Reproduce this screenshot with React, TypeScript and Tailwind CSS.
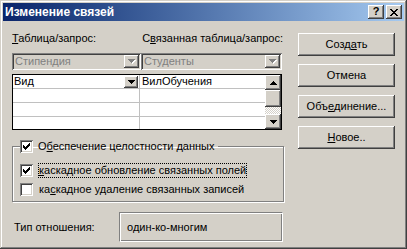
import React from "react";

const raised =
  "shadow-[inset_-1px_-1px_#404040,inset_1px_1px_#ffffff,inset_-2px_-2px_#808080,inset_2px_2px_#d4d0c8] bg-[#d4d0c8]";
const sunken =
  "shadow-[inset_1px_1px_#808080,inset_-1px_-1px_#ffffff,inset_2px_2px_#404040,inset_-2px_-2px_#d4d0c8]";

function Arrow({ up = false }: { up?: boolean }) {
  return (
    <svg width="7" height="4" viewBox="0 0 7 4" shapeRendering="crispEdges">
      {up ? (
        <path d="M3 0h1v1h1v1h1v1h1v1H0V3h1V2h1V1h1z" fill="#000" />
      ) : (
        <path d="M0 0h7v1H6v1H5v1H4v1H3V3H2V2H1V1H0z" fill="#000" />
      )}
    </svg>
  );
}

function DisabledArrow() {
  return (
    <svg width="8" height="5" viewBox="0 0 8 5" shapeRendering="crispEdges" className="block">
      <path d="M1 1h7v1H7v1H6v1H5v1H4V4H3V3H2V2H1z" fill="#ffffff" />
      <path d="M0 0h7v1H6v1H5v1H4v1H3V3H2V2H1V1H0z" fill="#808080" />
    </svg>
  );
}

function Check({ checked }: { checked: boolean }) {
  return (
    <div className={`w-[13px] h-[13px] bg-white shrink-0 ${sunken} flex items-center justify-center`}>
      {checked && (
        <svg width="7" height="7" viewBox="0 0 7 7" shapeRendering="crispEdges">
          <path d="M6 0h1v3H6v1H5v1H4v1H3v1H2V6H1V5H0V2h1v1h1v1h1V3h1V2h1V1h1z" fill="#000" />
        </svg>
      )}
    </div>
  );
}

function Button({ children }: { children: React.ReactNode }) {
  return (
    <div className={`h-[23px] w-[97px] ${raised} flex items-center justify-center whitespace-nowrap`}>
      {children}
    </div>
  );
}

export default function App() {
  return (
    <div className="w-[407px] h-[249px] bg-[#d4d0c8] p-[3px] flex flex-col font-['Liberation_Sans',sans-serif] text-[11px] leading-[13px] text-black whitespace-nowrap shadow-[inset_-1px_-1px_#404040,inset_1px_1px_#d4d0c8,inset_-2px_-2px_#808080,inset_2px_2px_#ffffff]">
      {/* title bar */}
      <div className="h-[18px] shrink-0 bg-gradient-to-r from-[#0a246a] to-[#a6caf0] flex items-center pl-[2px] pr-[2px]">
        <span className="text-white font-bold text-[12px]">Изменение связей</span>
        <div className="ml-auto flex gap-[2px]">
          <div className={`w-[16px] h-[14px] ${raised} flex items-center justify-center font-bold text-[11px] leading-none pb-[1px]`}>
            ?
          </div>
          <div className={`w-[16px] h-[14px] ${raised} flex items-center justify-center`}>
            <svg width="8" height="7" viewBox="0 0 8 7" shapeRendering="crispEdges">
              <path d="M0 0h2v1h1v1h2V1h1V0h2v1H7v1H6v1H5v1h1v1h1v1h1v1H6V6H5V5H3v1H2v1H0V6h1V5h1V4h1V3H2V2H1V1H0z" fill="#000" />
            </svg>
          </div>
        </div>
      </div>

      <div className="flex flex-1">
        {/* left column */}
        <div className="ml-[9px] w-[271px] flex flex-col">
          <div className="mt-[11px] flex h-[13px]">
            <div className="w-[135px]">
              <span className="underline">Т</span>аблица/запрос:
            </div>
            <div>
              С<span className="underline">в</span>язанная таблица/запрос:
            </div>
          </div>

          {/* disabled combos */}
          <div className="mt-[8px] flex h-[17px]">
            <div className={`w-[129px] h-[17px] ${sunken} flex items-center pl-[3px] pr-[2px]`}>
              <span className="text-[#808080]">Стипендия</span>
              <div className={`ml-auto w-[15px] h-[13px] ${raised} flex items-center justify-center`}>
                <DisabledArrow />
              </div>
            </div>
            <div className={`w-[141px] h-[17px] ${sunken} flex items-center pl-[3px] pr-[2px]`}>
              <span className="text-[#808080]">Студенты</span>
              <div className={`ml-auto w-[15px] h-[13px] ${raised} flex items-center justify-center`}>
                <DisabledArrow />
              </div>
            </div>
          </div>

          {/* grid */}
          <div className="mt-[4px] w-[270px] h-[56px] border border-black bg-white flex">
            <div className="flex-1 flex flex-col">
              {["Вид", "", "", ""].map((v, i) => (
                <div
                  key={i}
                  className={`flex ${i < 3 ? "h-[14px] border-b border-[#c0c0c0]" : "flex-1"}`}
                >
                  <div className="w-[127px] border-r border-[#c0c0c0] flex items-center pl-[1px]">
                    {v}
                    {i === 0 && (
                      <div className={`ml-auto mr-[1px] w-[14px] h-[12px] ${raised} flex items-center justify-center`}>
                        <Arrow />
                      </div>
                    )}
                  </div>
                  <div className="flex-1 flex items-center pl-[2px]">{i === 0 ? "ВилОбучения" : ""}</div>
                </div>
              ))}
            </div>
            <div className="w-[16px] flex flex-col">
              <div className={`h-[15px] ${raised} flex items-center justify-center`}>
                <Arrow up />
              </div>
              <div className={`h-[17px] ${raised}`} />
              <div className="flex-1 bg-[repeating-conic-gradient(#ffffff_0_25%,#d4d0c8_0_50%)] bg-[length:2px_2px]" />
              <div className={`h-[15px] ${raised} flex items-center justify-center`}>
                <Arrow />
              </div>
            </div>
          </div>

          {/* group box */}
          <fieldset className="mt-[10px] w-[272px] h-[62px] border border-[#808080] shadow-[1px_1px_#ffffff,inset_1px_1px_#ffffff] pl-[7px] pr-0 pt-0 pb-0 m-0">
            <legend className="flex items-center gap-[5px] pr-[4px]">
              <Check checked />
              <span>
                О<span className="underline">б</span>еспечение целостности данных
              </span>
            </legend>
            <div className="mt-[9px] flex items-center gap-[5px] h-[16px]">
              <Check checked />
              <span className="border border-dotted border-black leading-[13px]">
                <span className="underline">к</span>аскадное обновление связанных полей
              </span>
            </div>
            <div className="mt-[4px] flex items-center gap-[5px] h-[14px]">
              <Check checked={false} />
              <span className="pl-[1px]">
                ка<span className="underline">с</span>кадное удаление связанных записей
              </span>
            </div>
          </fieldset>

          {/* relation type */}
          <div className="mt-[10px] flex items-center h-[30px]">
            <div className="w-[107px] pl-[2px]">Тип отношения:</div>
            <div className="w-[164px] h-[30px] border border-t-[#808080] border-l-[#808080] border-r-white border-b-white shadow-[inset_1px_1px_#ffffff,inset_-1px_-1px_#808080] flex items-center pl-[7px]">
              один-ко-многим
            </div>
          </div>
        </div>

        {/* right column */}
        <div className="ml-[15px] mt-[12px] flex flex-col gap-[8px]">
          <Button>
            Созд<span className="underline">а</span>ть
          </Button>
          <Button>Отмена</Button>
          <Button>
            Объ<span className="underline">е</span>динение...
          </Button>
          <Button>
            <span className="underline">Н</span>овое..
          </Button>
        </div>
      </div>
    </div>
  );
}
